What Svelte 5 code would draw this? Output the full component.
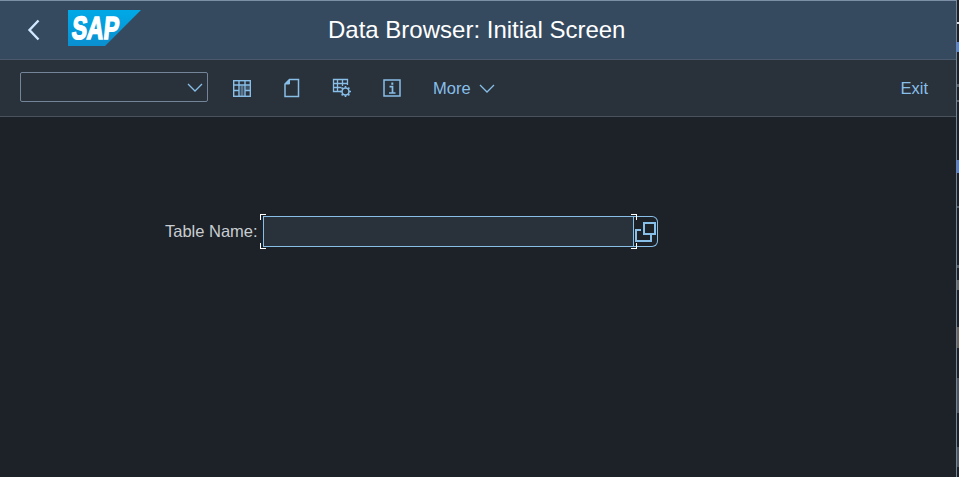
<script>
    let title = "Data Browser: Initial Screen";
    let tableName = "";

    // right-hand screen edge: slivers of whatever is behind the window
    let slivers = [
        { h: 2, gap: 22, color: "#d8dde2" },
        { h: 10, gap: 18, color: "#4f86e8" },
        { h: 3, gap: 32, color: "#5a626c" },
        { h: 2, gap: 13, color: "#5a626c" },
        { h: 13, gap: 58, color: "#4f7fe0" },
        { h: 2, gap: 33, color: "#59616b" },
        { h: 3, gap: 57, color: "#59616b" },
        { h: 10, gap: 12, color: "#6a6a66" },
        { h: 21, gap: 37, color: "#6c625a" },
        { h: 35, gap: 30, color: "#4d545e" },
        { h: 20, gap: 34, color: "#4d545e" }
    ];
</script>

<div class="desktop">
    <div class="window">
        <header class="shell">
            <button class="back" aria-label="Back">
                <svg width="14" height="22" viewBox="0 0 14 22">
                    <path d="M11.5 1.5 L2.5 11 L11.5 20.5" fill="none" stroke="#d1e8ff" stroke-width="2.4" />
                </svg>
            </button>
            <svg class="logo" width="73" height="36" viewBox="0 0 73 36">
                <defs>
                    <linearGradient id="sapblue" x1="0" y1="0" x2="0" y2="1">
                        <stop offset="0" stop-color="#00a9e6" />
                        <stop offset="1" stop-color="#0a8fd0" />
                    </linearGradient>
                </defs>
                <polygon points="0,0 73,0 37,36 0,36" fill="url(#sapblue)" />
                <text x="0" y="29" class="logo-text" transform="skewX(-6) translate(6 0)" textLength="47" lengthAdjust="spacingAndGlyphs">SAP</text>
            </svg>
            <h1>{title}</h1>
        </header>

        <nav class="toolbar">
            <div class="combo">
                <svg width="16" height="9" viewBox="0 0 16 9">
                    <path d="M1 1 L8 8 L15 1" fill="none" stroke="#88bfe9" stroke-width="1.3" />
                </svg>
            </div>

            <button class="tool first" aria-label="Columns">
                <svg width="20" height="20" viewBox="0 0 20 20" fill="none" stroke="#88bfe9" stroke-width="1.4">
                    <rect x="1.7" y="2.7" width="16.6" height="15.6" />
                    <path d="M1.7 7H18.3M1.7 12.5H7M13 12.5H18.3M7 2.7V18.3M13 2.7V18.3" />
                    <path d="M8.5 7.5H11.5V18H8.5Z" fill="#88bfe9" fill-opacity="0.5" stroke="none" />
                    <path d="M14 7.5H17.5V12H14Z" fill="#88bfe9" fill-opacity="0.25" stroke="none" />
                </svg>
            </button>
            <button class="tool" aria-label="Document">
                <svg width="20" height="20" viewBox="0 0 20 20" fill="none" stroke="#88bfe9" stroke-width="1.5">
                    <path d="M7.5 1.5H16.5V18.5H3V6Z" />
                    <path d="M7.5 1.5V6H3Z" fill="#88bfe9" stroke-width="1" />
                </svg>
            </button>
            <button class="tool" aria-label="Table settings">
                <svg width="20" height="20" viewBox="0 0 20 20" fill="none" stroke="#88bfe9" stroke-width="1.3">
                    <path d="M9 13.5H1.5V1.5H15.5V7M1.5 5.5H15.5M1.5 9.5H9.5M5.5 1.5V13.5M10.5 1.5V8" />
                    <circle cx="13.5" cy="13.5" r="3.5" stroke-width="1.6" />
                    <path d="M13.5 8V9.8M13.5 17.2V19M8 13.5H9.8M17.2 13.5H19M9.6 9.6L10.9 10.9M16.1 16.1L17.4 17.4M17.4 9.6L16.1 10.9M10.9 16.1L9.6 17.4" stroke-width="1.6" />
                </svg>
            </button>
            <button class="tool" aria-label="Information">
                <svg width="20" height="20" viewBox="0 0 20 20" fill="none" stroke="#88bfe9" stroke-width="1.5">
                    <rect x="2" y="2" width="16" height="16" />
                    <path d="M7.5 8.7H10.5V15M7 15H13.5" stroke-width="1.7" />
                    <path d="M10.3 4.5V6.8" stroke-width="2" />
                </svg>
            </button>

            <button class="more">
                More
                <svg width="16" height="9" viewBox="0 0 16 9">
                    <path d="M1 1 L8 8 L15 1" fill="none" stroke="#88bfe9" stroke-width="1.3" />
                </svg>
            </button>

            <button class="exit">Exit</button>
        </nav>

        <main class="content">
            <label class="field">
                <span class="label">Table Name:</span>
                <span class="input-wrap">
                    <input bind:value={tableName} />
                    <i class="corner tl"></i>
                    <i class="corner bl"></i>
                    <i class="corner tr"></i>
                    <i class="corner br"></i>
                </span>
                <span class="help">
                    <svg width="22" height="22" viewBox="0 0 22 22" fill="none" stroke="#88bfe9">
                        <rect x="10" y="2" width="11" height="11" stroke-width="2" />
                        <path d="M7 9H2V20H17V14" stroke-width="2" />
                    </svg>
                </span>
            </label>
        </main>
    </div>

    <div class="edge">
        {#each slivers as s}
            <span style:height="{s.h}px" style:margin-top="{s.gap}px" style:background={s.color}></span>
        {/each}
    </div>
</div>

<style>
    :global(body) {
        background: #1c2228;
        overflow: hidden;
    }

    .desktop {
        display: flex;
        width: 959px;
        height: 477px;
        font-family: "Liberation Sans", Arial, sans-serif;
    }

    .window {
        flex: none;
        display: flex;
        flex-direction: column;
        width: 957px;
        height: 477px;
        box-sizing: border-box;
        border-top: 1px solid #7d8fa6;
        border-right: 1px solid #76879c;
        background: #1c2228;
    }

    .edge {
        flex: 1;
        display: flex;
        flex-direction: column;
    }

    .edge span {
        display: block;
    }

    button {
        background: none;
        border: none;
        padding: 0;
        margin: 0;
        font-family: inherit;
        color: #88bfe9;
    }

    .shell {
        flex: none;
        display: flex;
        align-items: center;
        height: 59px;
        box-sizing: border-box;
        padding-left: 27px;
        background: #354a5f;
        border-bottom: 1px solid #4a5a6c;
    }

    .back {
        display: flex;
        width: 14px;
        height: 22px;
    }

    .logo {
        align-self: flex-start;
        margin: 9px 0 0 27px;
    }

    .logo-text {
        font-family: "Liberation Sans", Arial, sans-serif;
        font-weight: 700;
        font-size: 32px;
        fill: #fff;
        stroke: #fff;
        stroke-width: 1.6;
    }

    h1 {
        margin: 0 0 0 187px;
        font-size: 24px;
        font-weight: 400;
        color: #fff;
        white-space: nowrap;
    }

    .toolbar {
        flex: none;
        display: flex;
        align-items: center;
        height: 57px;
        box-sizing: border-box;
        padding: 0 28px 0 20px;
        background: #29313a;
        border-bottom: 1px solid #4a525c;
    }

    .combo {
        display: flex;
        align-items: center;
        justify-content: flex-end;
        width: 188px;
        height: 30px;
        margin-bottom: 2px;
        box-sizing: border-box;
        padding-right: 4px;
        background: #29313a;
        border: 1px solid #74859a;
        border-radius: 2px;
    }

    .tool {
        display: flex;
        width: 20px;
        height: 20px;
        margin-left: 30px;
    }

    .tool.first {
        margin-left: 24px;
    }

    .more {
        display: flex;
        align-items: center;
        gap: 8px;
        margin-left: 31px;
        font-size: 16.5px;
    }

    .exit {
        margin-left: auto;
        font-size: 16.5px;
    }

    .content {
        flex: 1;
        padding: 99px 0 0 165px;
    }

    .field {
        display: flex;
        align-items: center;
    }

    .label {
        font-size: 16.5px;
        color: #c9cdd1;
        margin-right: 5px;
    }

    .input-wrap {
        position: relative;
        display: block;
        width: 371px;
        height: 31px;
    }

    input {
        display: block;
        width: 100%;
        height: 100%;
        box-sizing: border-box;
        background: #29313a;
        border: 1px solid #88bfe9;
        outline: none;
        color: #fff;
    }

    .corner {
        position: absolute;
        width: 5px;
        height: 5px;
        border: 0 solid #fff;
    }

    .tl { left: -3px; top: -2px; border-width: 1px 0 0 1px; }
    .bl { left: -3px; bottom: -2px; border-width: 0 0 1px 1px; }
    .tr { right: -3px; top: -2px; border-width: 1px 1px 0 0; }
    .br { right: -3px; bottom: -2px; border-width: 0 1px 1px 0; }

    .help {
        display: flex;
        align-items: center;
        justify-content: center;
        width: 24px;
        height: 31px;
        box-sizing: border-box;
        border: 1px solid #88bfe9;
        border-left: none;
        border-radius: 0 6px 6px 0;
    }
</style>
